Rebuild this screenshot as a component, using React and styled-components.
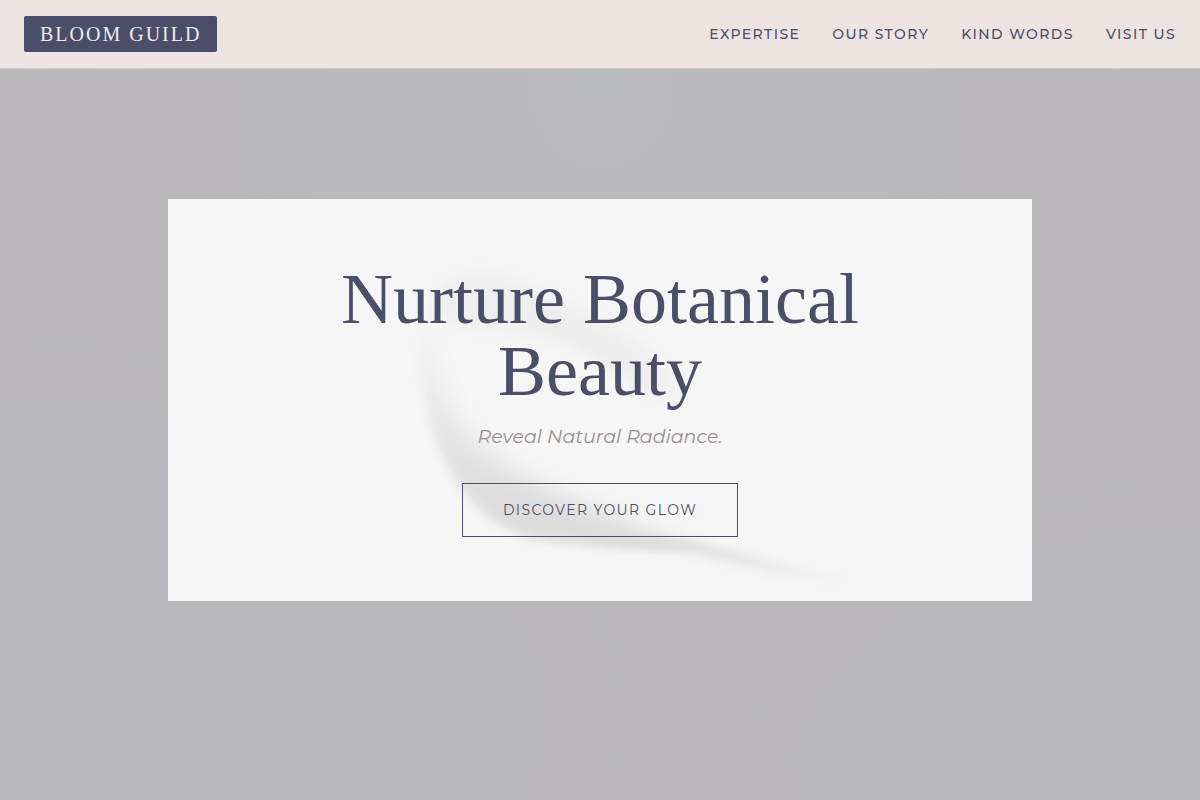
import React from 'react';
import styled, { createGlobalStyle } from 'styled-components';

const GlobalStyle = createGlobalStyle`
  * {
    box-sizing: border-box;
  }

  body {
    margin: 0;
    color: #4a4e69;
    font-family: Montserrat, Inter, sans-serif;
  }
`;

const StyledHeader = styled.header`
  position: fixed;
  top: 0;
  left: 0;
  right: 0;
  z-index: 10;
  display: flex;
  flex-wrap: wrap;
  justify-content: space-between;
  align-items: center;
  gap: 16px;
  padding: 16px 24px;
  background: linear-gradient(
    90deg,
    #ede4e3 0%,
    #ede4e2 34%,
    #ede4df 36%,
    #ede4df 57%,
    #ede4e2 60%,
    #ede4e2 91%,
    #ebe5e2 94%
  );
  border-bottom: 1px solid #cdc8ca;
`;

const Brand = styled.a`
  padding: 6px 16px;
  border-radius: 2px;
  background: #4a4e69;
  color: #f2e9e4;
  font-family: 'Liberation Serif', serif;
  font-size: 20px;
  line-height: 24px;
  letter-spacing: 0.1em;
  text-decoration: none;
  text-transform: uppercase;
`;

const Nav = styled.nav`
  display: flex;
  flex-wrap: wrap;
  gap: 32px;
`;

const NavLink = styled.a`
  color: #4a4e69;
  font-size: 14px;
  font-weight: 500;
  line-height: 20px;
  letter-spacing: 0.1em;
  text-decoration: none;
  text-transform: uppercase;

  &:hover {
    color: #9a8c98;
  }
`;

const Hero = styled.main`
  display: flex;
  justify-content: center;
  align-items: center;
  min-height: 100vh;
  padding: 80px 0;
  background:
    radial-gradient(ellipse at 50% 10%, #babbbd 0%, rgba(186, 187, 189, 0) 50%),
    radial-gradient(ellipse at 0% 90%, #b7b7bc 0%, rgba(183, 183, 188, 0) 40%),
    radial-gradient(ellipse at 100% 100%, #b7b7bc 0%, rgba(183, 183, 188, 0) 30%),
    #bab8bb;
`;

const Card = styled.section`
  position: relative;
  width: 72%;
  padding: 64px;
  background: #f6f6f6;
  text-align: center;
`;

const Smear = styled.svg`
  position: absolute;
  inset: 0;
  width: 100%;
  height: 100%;
`;

const Content = styled.div`
  position: relative;
`;

const Title = styled.h1`
  margin: 0 0 16px;
  font-family: 'Liberation Serif', serif;
  font-size: 72px;
  font-weight: 400;
  line-height: 72px;
`;

const Tagline = styled.p`
  margin: 0 0 32px;
  color: #998e92;
  font-size: 19px;
  font-style: italic;
  line-height: 28px;
`;

const Cta = styled.a`
  display: inline-block;
  padding: 16px 40px;
  border: 1px solid #4a4e69;
  color: #4a4e69;
  font-size: 14px;
  line-height: 20px;
  letter-spacing: 0.1em;
  text-decoration: none;
  text-transform: uppercase;
  vertical-align: top;

  &:hover {
    background: #4a4e69;
    color: #f6f6f6;
  }
`;

const links = [
  { href: '#expertise', label: 'Expertise' },
  { href: '#story', label: 'Our Story' },
  { href: '#words', label: 'Kind Words' },
  { href: '#visit', label: 'Visit Us' },
];

const CreamSmear = () => (
  <Smear viewBox="0 0 864 402" preserveAspectRatio="xMidYMid slice" aria-hidden="true">
    <defs>
      <filter id="wide" x="-40%" y="-40%" width="180%" height="180%">
        <feGaussianBlur stdDeviation="11" />
      </filter>
      <filter id="soft" x="-40%" y="-40%" width="180%" height="180%">
        <feGaussianBlur stdDeviation="8" />
      </filter>
      <filter id="fine" x="-40%" y="-40%" width="180%" height="180%">
        <feGaussianBlur stdDeviation="5" />
      </filter>
      <linearGradient id="edge" x1="0" y1="0" x2="0" y2="1">
        <stop offset="0" stopColor="#f2f2f2" />
        <stop offset="0.4" stopColor="#e6e6e6" />
        <stop offset="0.7" stopColor="#dedede" />
        <stop offset="1" stopColor="#dbdbdb" />
      </linearGradient>
      <linearGradient id="tail" gradientUnits="userSpaceOnUse" x1="300" y1="0" x2="690" y2="0">
        <stop offset="0" stopColor="#ebebeb" />
        <stop offset="0.4" stopColor="#d9d9d9" />
        <stop offset="0.65" stopColor="#e4e4e4" />
        <stop offset="1" stopColor="#f3f3f3" />
      </linearGradient>
      <mask id="body" maskUnits="userSpaceOnUse" x="0" y="0" width="864" height="402">
        <path
          d="M252 130 C250 200 265 248 288 282 C308 312 332 332 366 340 C420 346 470 344 530 352 L560 240 L420 60 L260 60Z"
          fill="#fff"
          filter="url(#fine)"
        />
      </mask>
    </defs>
    <path
      d="M266 100 C280 68 320 66 354 84 C400 100 440 124 474 146 C492 160 506 178 514 202 C474 184 446 164 410 148 C372 132 330 132 300 128 C276 126 262 118 266 100Z"
      fill="#efefef"
      filter="url(#soft)"
    />
    <path d="M364 120 C404 134 450 158 490 192" fill="none" stroke="#ececec" strokeWidth="14" filter="url(#soft)" />
    <g mask="url(#body)">
      <path
        d="M236 136 C236 200 250 250 272 290 C300 332 330 356 380 362 C430 366 480 358 530 362 C490 330 410 306 354 276 C306 248 272 210 260 130Z"
        fill="url(#edge)"
        filter="url(#wide)"
      />
    </g>
    <path
      d="M340 334 C400 342 470 334 530 342 C580 354 620 370 690 382 C630 384 580 368 530 356 C470 346 400 348 340 334Z"
      fill="url(#tail)"
      filter="url(#fine)"
    />
  </Smear>
);

const App = () => (
  <>
    <GlobalStyle />
    <StyledHeader>
      <Brand href="#home">Bloom Guild</Brand>
      <Nav>
        {links.map(({ href, label }) => (
          <NavLink key={href} href={href}>
            {label}
          </NavLink>
        ))}
      </Nav>
    </StyledHeader>
    <Hero id="home">
      <Card>
        <CreamSmear />
        <Content>
          <Title>Nurture Botanical Beauty</Title>
          <Tagline>Reveal Natural Radiance.</Tagline>
          <Cta href="#expertise">Discover Your Glow</Cta>
        </Content>
      </Card>
    </Hero>
  </>
);

export default App;
